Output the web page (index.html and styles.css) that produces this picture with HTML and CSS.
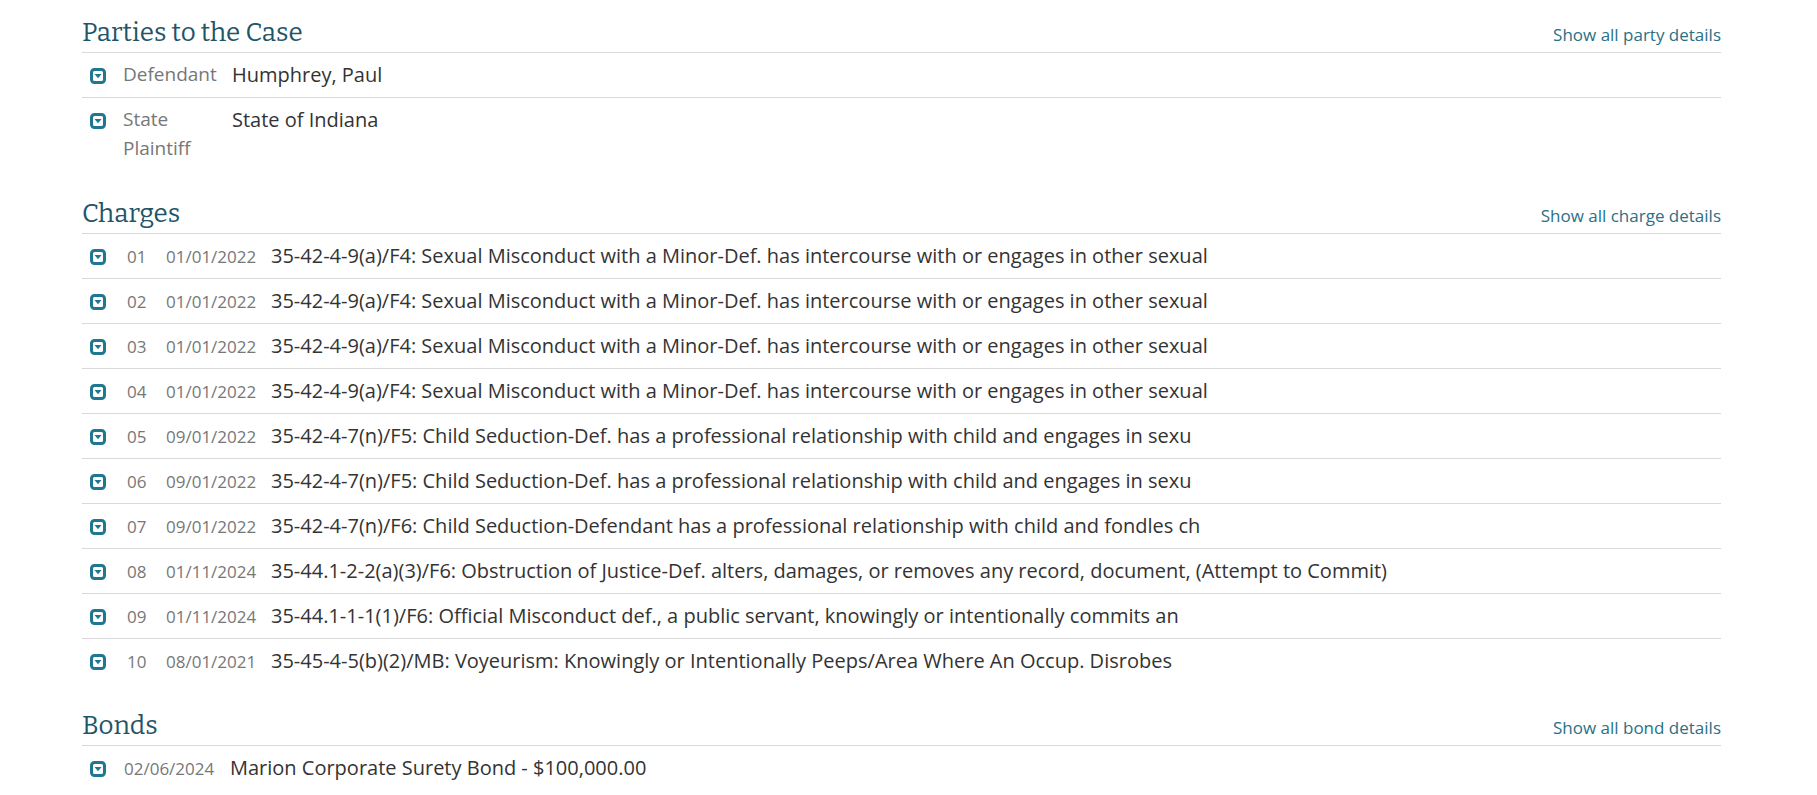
FILE: index.html
```html
<!DOCTYPE html>
<html lang="en">
<head>
    <meta charset="UTF-8">
    <meta name="viewport" content="width=device-width, initial-scale=1.0">
    <title>Case Summary</title>
    <link rel="stylesheet" href="styles.css">
</head>
<body>
<svg class="sprite" aria-hidden="true">
    <symbol id="expand" viewBox="0 0 16 16">
        <rect x="1.5" y="1.5" width="13" height="13" rx="3" fill="none" stroke="currentColor" stroke-width="3"/>
        <path d="M4.5 6h7L8 10.2z" fill="currentColor"/>
    </symbol>
</svg>

<main class="case">
    <section class="parties">
        <header class="section-head">
            <h2>Parties to the Case</h2>
            <a href="#">Show all party details</a>
        </header>
        <table>
            <tr>
                <td class="toggle"><button aria-label="Show details"><svg><use href="#expand"/></svg></button></td>
                <td class="role">Defendant</td>
                <td class="text">Humphrey, Paul</td>
            </tr>
            <tr>
                <td class="toggle"><button aria-label="Show details"><svg><use href="#expand"/></svg></button></td>
                <td class="role">State Plaintiff</td>
                <td class="text">State of Indiana</td>
            </tr>
        </table>
    </section>

    <section class="charges">
        <header class="section-head">
            <h2>Charges</h2>
            <a href="#">Show all charge details</a>
        </header>
        <table id="chargeTable"></table>
    </section>

    <section class="bonds">
        <header class="section-head">
            <h2>Bonds</h2>
            <a href="#">Show all bond details</a>
        </header>
        <table>
            <tr>
                <td class="toggle"><button aria-label="Show details"><svg><use href="#expand"/></svg></button></td>
                <td class="date">02/06/2024</td>
                <td class="text">Marion Corporate Surety Bond - $100,000.00</td>
            </tr>
        </table>
    </section>
</main>

<script>
const misconduct = "35-42-4-9(a)/F4: Sexual Misconduct with a Minor-Def. has intercourse with or engages in other sexual";
const seduction = "35-42-4-7(n)/F5: Child Seduction-Def. has a professional relationship with child and engages in sexu";

const charges = [
    ["01/01/2022", misconduct],
    ["01/01/2022", misconduct],
    ["01/01/2022", misconduct],
    ["01/01/2022", misconduct],
    ["09/01/2022", seduction],
    ["09/01/2022", seduction],
    ["09/01/2022", "35-42-4-7(n)/F6: Child Seduction-Defendant has a professional relationship with child and fondles ch"],
    ["01/11/2024", "35-44.1-2-2(a)(3)/F6: Obstruction of Justice-Def. alters, damages, or removes any record, document, (Attempt to Commit)"],
    ["01/11/2024", "35-44.1-1-1(1)/F6: Official Misconduct def., a public servant, knowingly or intentionally commits an"],
    ["08/01/2021", "35-45-4-5(b)(2)/MB: Voyeurism: Knowingly or Intentionally Peeps/Area Where An Occup. Disrobes"]
];

// One table row per charge, numbered from 01
const table = document.getElementById("chargeTable");
charges.forEach(([date, text], i) => {
    const row = table.insertRow();
    const toggle = row.insertCell();
    toggle.className = "toggle";
    toggle.innerHTML = '<button aria-label="Show details"><svg><use href="#expand"/></svg></button>';
    [["number", String(i + 1).padStart(2, "0")], ["date", date], ["text", text]].forEach(([name, value]) => {
        const cell = row.insertCell();
        cell.className = name;
        cell.textContent = value;
    });
});
</script>
</body>
</html>
```
FILE: styles.css
```css
* {
    box-sizing: border-box;
}
body {
    margin: 0;
    background-color: #fff;
    color: #333;
    font-family: "Open Sans", "Noto Sans", sans-serif;
    font-size: 20px;
    line-height: 29px;
}
.sprite {
    display: none;
}
.case {
    margin: 0 96px 0 82px;
    padding-top: 14px;
}
section {
    margin-bottom: 24px;
}
section:last-child {
    margin-bottom: 0;
}
.section-head {
    display: flex;
    justify-content: space-between;
    align-items: baseline;
    height: 39px;
    border-bottom: 1px solid #d9d9d9;
}
h2 {
    margin: 0;
    color: #1f5568;
    font-family: "Bitter", "Noto Serif", "DejaVu Serif", serif;
    font-size: 26px;
    font-weight: 400;
    line-height: 38px;
}
a {
    color: #2a7086;
    font-size: 17px;
    text-decoration: none;
}
table {
    width: 100%;
    border-spacing: 0;
}
td {
    padding: 7px 0 8px;
    vertical-align: baseline;
}
tr + tr td {
    border-top: 1px solid #d9d9d9;
}
.toggle {
    width: 41px;
    padding-left: 8px;
    vertical-align: top;
}
button {
    display: block;
    margin: 8px 0 0;
    padding: 0;
    border: 0;
    background: none;
    color: #1f7790;
}
button svg {
    display: block;
    width: 16px;
    height: 16px;
}
.role {
    width: 109px;
    padding-right: 12px;
    color: #777;
    font-size: 19px;
    vertical-align: top;
}
.number {
    width: 43px;
    padding-left: 4px;
    color: #777;
    font-size: 17px;
    line-height: 24px;
}
.date {
    width: 105px;
    color: #777;
    font-size: 17px;
    line-height: 24px;
}
.bonds .date {
    width: 107px;
    padding-left: 1px;
}
```
